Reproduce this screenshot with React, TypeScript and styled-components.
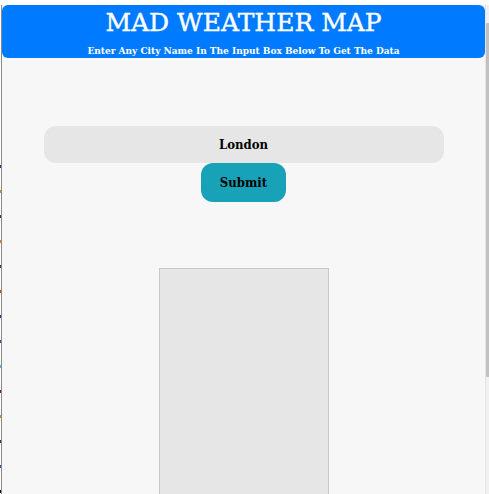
import React from "react";
import styled, { createGlobalStyle } from "styled-components";

const Global = createGlobalStyle`
  html, body { margin: 0; padding: 0; background: #ffffff; }
  body { font-family: "DejaVu Serif", "Liberation Serif", serif; }
`;

const Page = styled.div`
  height: 494px;
  display: flex;
  flex-direction: column;
  overflow: hidden;
`;

const TopStrip = styled.div`
  height: 5px;
  flex: none;
  background: #ffffff;
`;

const Body = styled.div`
  flex: 1;
  display: flex;
  min-height: 0;
`;

const LeftEdge = styled.div`
  width: 2px;
  flex: none;
  display: flex;
`;

const MarkColumn = styled.div`
  width: 1px;
  display: flex;
  flex-direction: column;
  padding-top: 160px;
  gap: 22px;
`;

const Mark = styled.div<{ $c: string }>`
  width: 1px;
  height: 3px;
  flex: none;
  background: ${(p) => p.$c};
`;

const EdgeLine = styled.div`
  width: 1px;
  background: #8a8a8a;
`;

const Main = styled.main`
  flex: 1;
  background: #f7f7f7;
  display: flex;
  flex-direction: column;
  align-items: center;
`;

const Header = styled.header`
  flex: none;
  align-self: stretch;
  height: 53px;
  background: #007bff;
  border-radius: 6px;
  color: #ffffff;
  display: flex;
  flex-direction: column;
  align-items: center;
`;

const Title = styled.h1`
  margin: 0;
  font-size: 25px;
  font-weight: 400;
  line-height: 35px;
  -webkit-text-stroke: 0.4px #ffffff;
`;

const Subtitle = styled.p`
  margin: 4px 0 0;
  font-size: 10px;
  font-stretch: condensed;
  font-weight: 700;
  line-height: 14px;
`;

const Form = styled.form`
  flex: none;
  margin-top: 68px;
  display: flex;
  flex-direction: column;
  align-items: center;
`;

const CityInput = styled.input`
  width: 400px;
  height: 37px;
  box-sizing: border-box;
  border: none;
  border-radius: 12px;
  background: #e6e6e6;
  text-align: center;
  font-family: "DejaVu Serif", serif;
  font-stretch: condensed;
  font-weight: 700;
  font-size: 13px;
  color: #000;
  outline: none;
`;

const SubmitButton = styled.button`
  width: 85px;
  height: 39px;
  border: none;
  border-radius: 12px;
  background: #17a2b8;
  font-family: "DejaVu Serif", serif;
  font-stretch: condensed;
  font-weight: 700;
  font-size: 13px;
  color: #000;
  padding: 0;
`;

const ResultBox = styled.div`
  margin-top: 66px;
  width: 170px;
  height: 260px;
  flex: none;
  box-sizing: border-box;
  background: #e6e6e6;
  border: 1px solid #c8c8c8;
`;

const ScrollTrack = styled.div`
  width: 4px;
  flex: none;
  background: #f1f1f1;
  border-left: 1px solid #e6e6e6;
  box-sizing: border-box;
  display: flex;
  flex-direction: column;
`;

const Thumb = styled.div`
  margin-top: 18px;
  height: 354px;
  background: #c1c1c1;
`;

const marks = ["#1b3a8a", "#d38a1a", "#6b1a5a", "#d38a1a", "#6b1a5a", "#c0501a", "#3a2a8a", "#2a5ab0", "#5ab0e0", "#7a1a4a", "#d38a1a", "#6b1a5a", "#2a5ab0", "#111111"];

export default function App() {
  return (
    <Page>
      <Global />
      <TopStrip />
      <Body>
        <LeftEdge>
          <MarkColumn>
            {marks.map((c, i) => (
              <Mark key={i} $c={c} />
            ))}
          </MarkColumn>
          <EdgeLine />
        </LeftEdge>
        <Main>
          <Header>
            <Title>MAD WEATHER MAP</Title>
            <Subtitle>Enter Any City Name In The Input Box Below To Get The Data</Subtitle>
          </Header>
          <Form onSubmit={(e) => e.preventDefault()}>
            <CityInput defaultValue="London" />
            <SubmitButton type="submit">Submit</SubmitButton>
          </Form>
          <ResultBox />
        </Main>
        <ScrollTrack>
          <Thumb />
        </ScrollTrack>
      </Body>
    </Page>
  );
}
